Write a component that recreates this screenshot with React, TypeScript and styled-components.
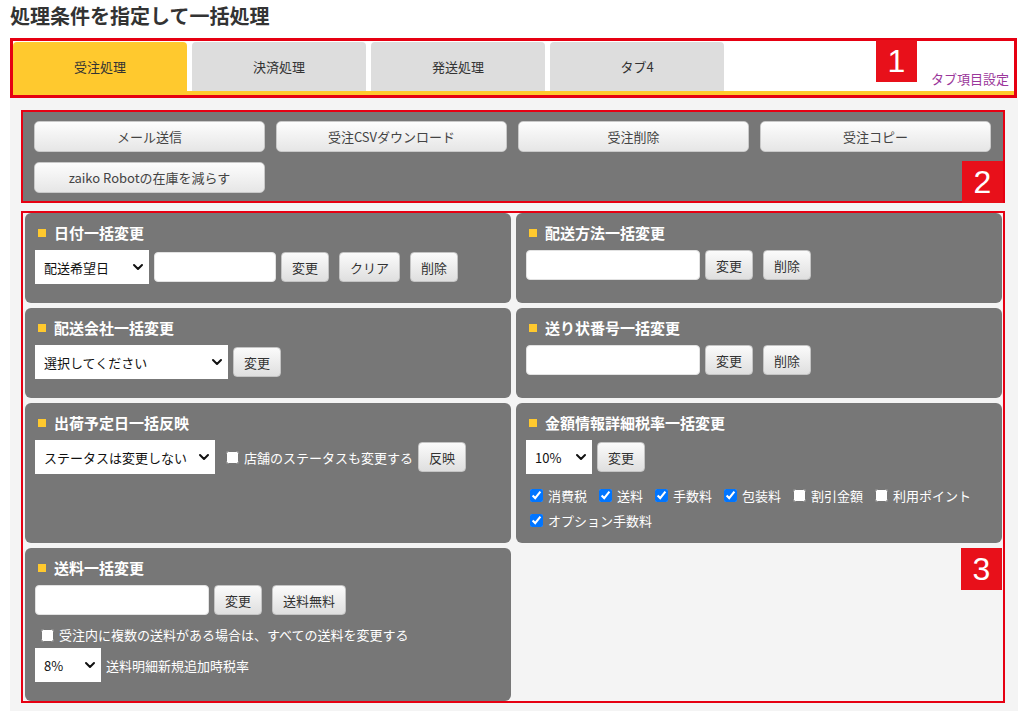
import styled, { createGlobalStyle } from "styled-components";
import { FC, ReactNode } from "react";
import { ChevronDown } from "lucide-react";

const COLORS = {
  RED: "#e60012",
  BADGE: "#e8101a",
  YELLOW: "#ffc92e",
  TAB: "#dddddd",
  PANEL: "#777777",
  WORKSPACE: "#f4f4f4",
  LINK: "#9b379b",
  TEXT: "#333333",
  WHITE: "#ffffff",
};

const FONT = `"Noto Sans CJK JP", "Noto Sans", sans-serif`;

const GlobalStyle = createGlobalStyle`
  html, body {
    margin: 0;
    padding: 0;
    background: ${COLORS.WHITE};
  }
  body {
    font-family: ${FONT};
    font-size: 13px;
    color: ${COLORS.TEXT};
  }
  * {
    box-sizing: border-box;
  }
`;

const Page = styled.div`
  width: 1027px;
  padding: 0 9px 0 10px;
`;

const PageTitle = styled.h1`
  margin: 0;
  height: 38px;
  font-size: 20px;
  font-weight: 700;
  line-height: 32px;
  color: ${COLORS.TEXT};
`;

// ---- tabs (area 1)

const TabFrame = styled.div`
  position: relative;
  margin-right: 1px;
  border: 3px solid ${COLORS.RED};
  background: ${COLORS.WHITE};
`;

const TabBar = styled.nav`
  display: flex;
  align-items: flex-end;
  padding-top: 1px;
  border-bottom: 4px solid ${COLORS.YELLOW};
`;

const Tab = styled.div<{ $active?: boolean }>`
  width: 174px;
  height: 49px;
  margin-right: 5px;
  display: flex;
  align-items: center;
  justify-content: center;
  border-radius: 4px 4px 0 0;
  background: ${(p) => (p.$active ? COLORS.YELLOW : COLORS.TAB)};
  font-size: 13px;
  color: ${COLORS.TEXT};
`;

const SettingLink = styled.a`
  margin: 0 5px 4px auto;
  font-size: 13px;
  line-height: 16px;
  color: ${COLORS.LINK};
  text-decoration: none;
`;

const Badge = styled.span<{ $top?: number; $right?: number; $bottom?: number }>`
  position: absolute;
  ${(p) => (p.$top !== undefined ? `top: ${p.$top}px;` : "")}
  ${(p) => (p.$bottom !== undefined ? `bottom: ${p.$bottom}px;` : "")}
  right: ${(p) => p.$right ?? 0}px;
  width: 41px;
  height: 42px;
  display: flex;
  align-items: center;
  justify-content: center;
  background: ${COLORS.BADGE};
  color: ${COLORS.WHITE};
  font-family: "Liberation Sans", Arial, sans-serif;
  font-size: 32px;
  line-height: 1;
`;

// ---- workspace

const Workspace = styled.div`
  display: flex;
  flex-direction: column;
  gap: 8px;
  padding: 12px 13px 9px 11px;
  background: ${COLORS.WORKSPACE};
`;

// ---- bulk actions (area 2)

const ActionBox = styled.div`
  position: relative;
  display: grid;
  grid-template-columns: repeat(4, 1fr);
  column-gap: 11px;
  row-gap: 10px;
  padding: 9px 12px 8px 11px;
  border: 2px solid ${COLORS.RED};
  background: ${COLORS.PANEL};
`;

const ActionButton = styled.button`
  height: 31px;
  border: 1px solid #c9c9c9;
  border-radius: 5px;
  background: linear-gradient(#fdfdfd, #e6e6e6);
  font-family: ${FONT};
  font-size: 13px;
  color: #444;
  cursor: pointer;
`;

// ---- condition panels (area 3)

const PanelGrid = styled.div`
  position: relative;
  display: grid;
  grid-template-columns: 1fr 1fr;
  gap: 5px;
  padding: 0 1px 0 2px;
  border: 2px solid ${COLORS.RED};
`;

const Panel = styled.section`
  padding: 10px;
  border-radius: 6px;
  background: ${COLORS.PANEL};
  color: ${COLORS.WHITE};
`;

const EmptyCell = styled.div`
  position: relative;
`;

const PanelTitle = styled.h3`
  display: flex;
  align-items: center;
  gap: 8px;
  margin: 0 0 7px;
  padding-left: 3px;
  font-size: 15px;
  font-weight: 700;
  line-height: 20px;
  color: ${COLORS.WHITE};

  &::before {
    content: "";
    width: 8px;
    height: 8px;
    background: ${COLORS.YELLOW};
  }
`;

const Row = styled.div<{ $mb?: number; $indent?: number }>`
  display: flex;
  align-items: center;
  gap: 5px;
  margin-bottom: ${(p) => p.$mb ?? 9}px;
  padding-left: ${(p) => p.$indent ?? 0}px;
`;

const TextInput = styled.input<{ $w: number }>`
  width: ${(p) => p.$w}px;
  height: 30px;
  padding: 0 6px;
  border: 1px solid #e2e2e2;
  border-radius: 4px;
  background: ${COLORS.WHITE};
  font-family: ${FONT};
  font-size: 13px;
`;

const SmallButton = styled.button<{ $spaced?: boolean }>`
  height: 30px;
  padding: 0 10px;
  margin-left: ${(p) => (p.$spaced ? 5 : 0)}px;
  border: 1px solid #c4c4c4;
  border-radius: 4px;
  background: linear-gradient(#fbfbfb, #dfdfdf);
  font-family: ${FONT};
  font-size: 13px;
  color: ${COLORS.TEXT};
  white-space: nowrap;
  cursor: pointer;
`;

const SelectWrap = styled.div<{ $w: number }>`
  position: relative;
  flex: none;
  width: ${(p) => p.$w}px;
  height: 34px;
`;

const NativeSelect = styled.select`
  appearance: none;
  width: 100%;
  height: 100%;
  padding: 0 22px 0 9px;
  border: none;
  border-radius: 0;
  background: ${COLORS.WHITE};
  font-family: ${FONT};
  font-size: 13px;
  color: #111;
  outline: none;
`;

const Chevron = styled(ChevronDown)`
  position: absolute;
  right: 3px;
  top: 50%;
  transform: translateY(-50%);
  pointer-events: none;
  color: #111;
`;

const CheckList = styled.div`
  display: flex;
  flex-wrap: wrap;
  column-gap: 8px;
  margin-top: 1px;
`;

const CheckLabel = styled.label<{ $lh?: number; $offset?: number }>`
  display: inline-flex;
  align-items: center;
  margin-left: ${(p) => p.$offset ?? 0}px;
  font-size: 13px;
  line-height: ${(p) => p.$lh ?? 25}px;
  color: ${COLORS.WHITE};
  white-space: nowrap;
`;

const CheckBox = styled.input.attrs({ type: "checkbox" })`
  width: 13px;
  height: 13px;
  margin: 0 5px 0 4px;
`;

const PlainText = styled.span`
  font-size: 13px;
  color: ${COLORS.WHITE};
`;

interface ISelectProps {
  width: number;
  value: string;
  options?: string[];
}

const Select: FC<ISelectProps> = ({ width, value, options = [] }) => (
  <SelectWrap $w={width}>
    <NativeSelect defaultValue={value}>
      {[value, ...options].map((o) => (
        <option key={o}>{o}</option>
      ))}
    </NativeSelect>
    <Chevron size={16} strokeWidth={3} />
  </SelectWrap>
);

interface ICheckProps {
  label: string;
  checked?: boolean;
  lineHeight?: number;
  offset?: number;
}

const Check: FC<ICheckProps> = ({ label, checked, lineHeight, offset }) => (
  <CheckLabel $lh={lineHeight} $offset={offset}>
    <CheckBox defaultChecked={checked} />
    {label}
  </CheckLabel>
);

const ConditionPanel: FC<{ title: string; children: ReactNode }> = ({ title, children }) => (
  <Panel>
    <PanelTitle>{title}</PanelTitle>
    {children}
  </Panel>
);

const TABS = ["受注処理", "決済処理", "発送処理", "タブ4"];

const ACTIONS = [
  "メール送信",
  "受注CSVダウンロード",
  "受注削除",
  "受注コピー",
  "zaiko Robotの在庫を減らす",
];

const TAX_TARGETS = [
  { label: "消費税", checked: true },
  { label: "送料", checked: true },
  { label: "手数料", checked: true },
  { label: "包装料", checked: true },
  { label: "割引金額", checked: false },
  { label: "利用ポイント", checked: false },
  { label: "オプション手数料", checked: true },
];

export default function App() {
  return (
    <Page>
      <GlobalStyle />
      <PageTitle>処理条件を指定して一括処理</PageTitle>

      <TabFrame>
        <TabBar>
          {TABS.map((t, i) => (
            <Tab key={t} $active={i === 0}>
              {t}
            </Tab>
          ))}
          <SettingLink href="#">タブ項目設定</SettingLink>
        </TabBar>
        <Badge $top={-1} $right={97}>1</Badge>
      </TabFrame>

      <Workspace>
        <ActionBox>
          {ACTIONS.map((a) => (
            <ActionButton key={a}>{a}</ActionButton>
          ))}
          <Badge $bottom={-2} $right={0}>2</Badge>
        </ActionBox>

        <PanelGrid>
          <ConditionPanel title="日付一括変更">
            <Row>
              <Select width={114} value="配送希望日" options={["出荷予定日"]} />
              <TextInput $w={122} />
              <SmallButton>変更</SmallButton>
              <SmallButton $spaced>クリア</SmallButton>
              <SmallButton $spaced>削除</SmallButton>
            </Row>
          </ConditionPanel>

          <ConditionPanel title="配送方法一括変更">
            <Row>
              <TextInput $w={174} />
              <SmallButton>変更</SmallButton>
              <SmallButton $spaced>削除</SmallButton>
            </Row>
          </ConditionPanel>

          <ConditionPanel title="配送会社一括変更">
            <Row>
              <Select width={193} value="選択してください" />
              <SmallButton>変更</SmallButton>
            </Row>
          </ConditionPanel>

          <ConditionPanel title="送り状番号一括変更">
            <Row>
              <TextInput $w={174} />
              <SmallButton>変更</SmallButton>
              <SmallButton $spaced>削除</SmallButton>
            </Row>
          </ConditionPanel>

          <ConditionPanel title="出荷予定日一括反映">
            <Row>
              <Select width={180} value="ステータスは変更しない" />
              <Check label="店舗のステータスも変更する" offset={2} />
              <SmallButton>反映</SmallButton>
            </Row>
          </ConditionPanel>

          <ConditionPanel title="金額情報詳細税率一括変更">
            <Row>
              <Select width={66} value="10%" options={["8%"]} />
              <SmallButton>変更</SmallButton>
            </Row>
            <CheckList>
              {TAX_TARGETS.map((t) => (
                <Check key={t.label} label={t.label} checked={t.checked} />
              ))}
            </CheckList>
          </ConditionPanel>

          <ConditionPanel title="送料一括変更">
            <Row>
              <TextInput $w={174} />
              <SmallButton>変更</SmallButton>
              <SmallButton $spaced>送料無料</SmallButton>
            </Row>
            <Row $mb={2} $indent={2}>
              <Check label="受注内に複数の送料がある場合は、すべての送料を変更する" lineHeight={22} />
            </Row>
            <Row $mb={9}>
              <Select width={66} value="8%" options={["10%"]} />
              <PlainText>送料明細新規追加時税率</PlainText>
            </Row>
          </ConditionPanel>

          <EmptyCell>
            <Badge $top={0} $right={0}>3</Badge>
          </EmptyCell>
        </PanelGrid>
      </Workspace>
    </Page>
  );
}
